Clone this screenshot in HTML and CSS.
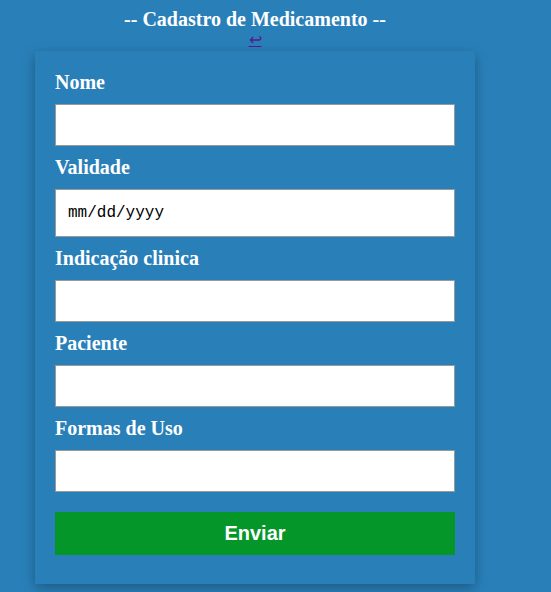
FILE: index.html
```html
<!DOCTYPE html>
<html>
<head>
<meta charset="utf-8">
<link rel="stylesheet" href="styles.css">
</head>
<body>
<div class="page">
  <header class="head">
    <h1 class="title">-- Cadastro de Medicamento --</h1>
    <a class="back" href="#">↩</a>
  </header>
  <form class="card">
    <label class="label">Nome</label>
    <input class="field" type="text">
    <label class="label">Validade</label>
    <input class="field date" type="text" value="mm/dd/yyyy">
    <label class="label">Indicação clinica</label>
    <input class="field" type="text">
    <label class="label">Paciente</label>
    <input class="field" type="text">
    <label class="label">Formas de Uso</label>
    <input class="field" type="text">
    <button class="submit" type="button">Enviar</button>
  </form>
</div>
</body>
</html>
```
FILE: styles.css
```css
html, body {
  margin: 0;
  background: #2980b9;
}
body {
  padding: 8px;
  font-family: "Liberation Serif", "Times New Roman", serif;
}
.page {
  width: 494px;
}
.head {
  text-align: center;
}
.title {
  margin: 0;
  font-size: 20px;
  line-height: 23px;
  font-weight: bold;
  color: #ffffff;
}
.back {
  display: inline-block;
  font-size: 16px;
  line-height: 18px;
  color: #551a8b;
}
.card {
  width: 440px;
  box-sizing: border-box;
  margin: 2px auto 0;
  padding: 20px 20px 29px;
  background: #2980b9;
  box-shadow: 0 4px 12px rgba(0, 0, 0, 0.3);
  display: flex;
  flex-direction: column;
}
.label {
  font-size: 20px;
  line-height: 23px;
  font-weight: bold;
  color: #ffffff;
  margin-bottom: 10px;
}
.field {
  height: 42px;
  box-sizing: border-box;
  border: 1px solid #999999;
  background: #ffffff;
  padding: 0 12px;
  margin: 0 0 10px;
  font-size: 16px;
  font-family: "Liberation Mono", monospace;
  color: #000;
  outline: none;
}
.field.date {
  height: 48px;
}
.submit {
  margin-top: 10px;
  height: 43px;
  border: none;
  background: #05962a;
  color: #ffffff;
  font-family: "Liberation Sans", Arial, sans-serif;
  font-size: 20px;
  font-weight: bold;
}
```
